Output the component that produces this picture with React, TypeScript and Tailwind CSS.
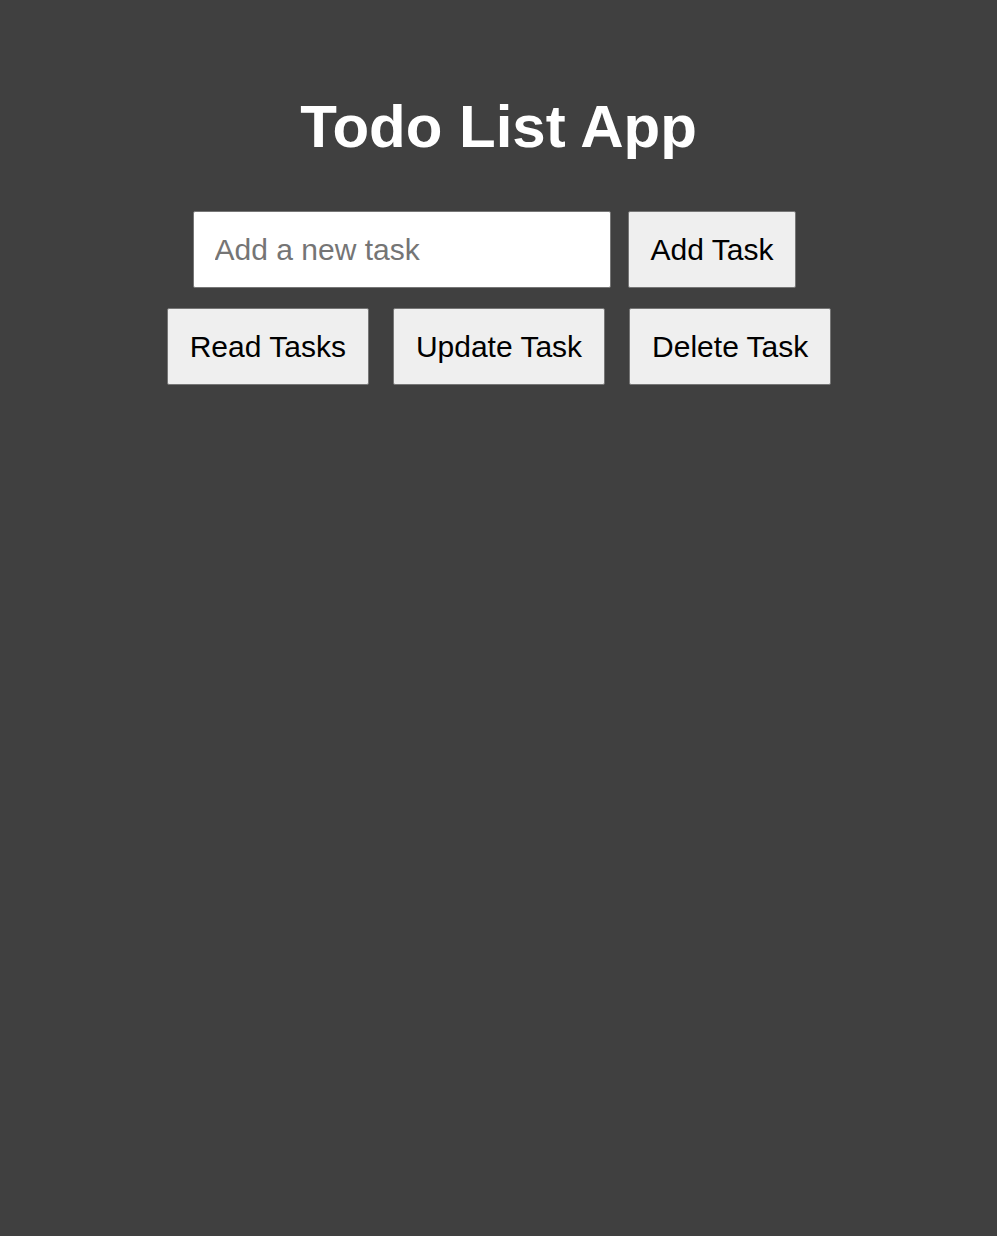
export default function App() {
  const btn =
    "bg-[#efefef] text-black border border-[#767676] rounded-[2px] text-[30px] leading-[35px] py-[20px] px-[22px] whitespace-nowrap";
  return (
    <div
      className="min-h-[1236px] w-full bg-[#404040] flex flex-col items-center"
      style={{ fontFamily: '"Liberation Sans", Arial, sans-serif' }}
    >
      <h1 className="mt-[92px] text-white font-bold text-[60px] leading-[69px]">
        Todo List App
      </h1>
      <div className="mt-[50px] flex gap-[17px] pr-[8px]">
        <input
          type="text"
          placeholder="Add a new task"
          className="w-[418px] h-[77px] bg-white border border-[#767676] rounded-[2px] px-[21px] text-[30px] text-black placeholder:text-[#757575] outline-none"
        />
        <button className={btn}>Add Task</button>
      </div>
      <div className="mt-[20px] flex gap-[24px] pl-[1px]">
        <button className={btn}>Read Tasks</button>
        <button className={btn}>Update Task</button>
        <button className={btn}>Delete Task</button>
      </div>
    </div>
  );
}
